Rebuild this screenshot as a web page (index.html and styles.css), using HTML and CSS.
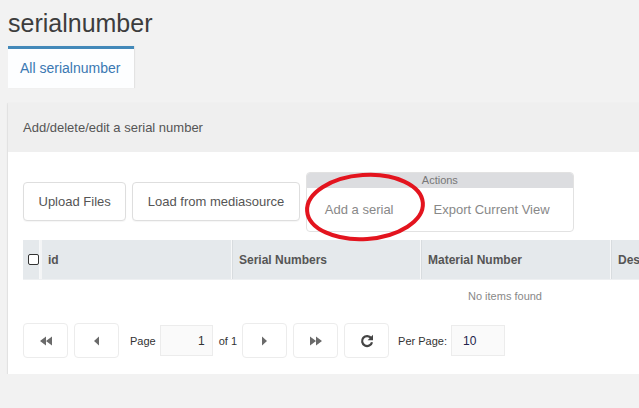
FILE: index.html
```html
<!DOCTYPE html>
<html>
<head>
<meta charset="utf-8">
<title>serialnumber</title>
<link rel="stylesheet" href="styles.css">
</head>
<body>
<div class="page">
  <h1 class="title">serialnumber</h1>
  <div class="tabs">
    <div class="tab active">All serialnumber</div>
  </div>
  <div class="panel">
    <div class="band">Add/delete/edit a serial number</div>
    <div class="toolbar">
      <button class="btn">Upload Files</button>
      <button class="btn">Load from mediasource</button>
      <div class="group">
        <div class="group-head">Actions</div>
        <div class="group-body">
          <span class="group-item">Add a serial</span>
          <span class="group-item">Export Current View</span>
        </div>
      </div>
      <svg class="annot" width="140" height="80" viewBox="0 0 140 80">
        <ellipse cx="66" cy="38" rx="58" ry="32" fill="none" stroke="#e3141e" stroke-width="4" transform="rotate(-4 66 38)"/>
      </svg>
    </div>
    <div class="table">
      <div class="thead">
        <div class="th th-cb"><span class="cb"></span></div>
        <div class="th th-id">id</div>
        <div class="th th-sn">Serial Numbers</div>
        <div class="th th-mn">Material Number</div>
        <div class="th th-ds">Description</div>
      </div>
      <div class="empty">No items found</div>
    </div>
    <div class="pager">
      <button class="pbtn" aria-label="first">
        <svg width="14" height="10" viewBox="0 0 14 10"><path d="M7 0.5 L1 5 L7 9.5 Z M13 0.5 L7 5 L13 9.5 Z" fill="#6a6a6a"/></svg>
      </button>
      <button class="pbtn" aria-label="previous">
        <svg width="7" height="10" viewBox="0 0 7 10"><path d="M6 0.5 L1 5 L6 9.5 Z" fill="#6a6a6a"/></svg>
      </button>
      <span class="plabel plabel-page">Page</span>
      <input class="pinput pinput-page" value="1">
      <span class="plabel plabel-of">of 1</span>
      <button class="pbtn" aria-label="next">
        <svg width="7" height="10" viewBox="0 0 7 10"><path d="M1 0.5 L6 5 L1 9.5 Z" fill="#6a6a6a"/></svg>
      </button>
      <button class="pbtn" aria-label="last">
        <svg width="14" height="10" viewBox="0 0 14 10"><path d="M1 0.5 L7 5 L1 9.5 Z M7 0.5 L13 5 L7 9.5 Z" fill="#6a6a6a"/></svg>
      </button>
      <button class="pbtn" aria-label="refresh">
        <svg width="14" height="14" viewBox="0 0 14 14"><path d="M11.2 4.2 A5 5 0 1 0 12 8.2" fill="none" stroke="#444" stroke-width="2.2"/><path d="M13 0.8 L13 6.2 L7.6 6.2 Z" fill="#444"/></svg>
      </button>
      <span class="plabel plabel-per">Per Page:</span>
      <input class="pinput pinput-per" value="10">
    </div>
  </div>
</div>
</body>
</html>
```
FILE: styles.css
```css
html, body {
  margin: 0;
  padding: 0;
  overflow: hidden;
  background: #f2f2f2;
  font-family: "Liberation Sans", Arial, sans-serif;
}
.page {
  padding-left: 8px;
  width: 1010px;
}
.title {
  margin: 8px 0 8px 0;
  font-size: 25px;
  line-height: 30px;
  font-weight: normal;
  color: #3d3d3d;
}
.tabs {
  display: flex;
}
.tab {
  width: 126px;
  box-sizing: border-box;
  height: 42px;
  border-top: 3px solid #4389b9;
  background: #fdfeff;
  color: #3a78b2;
  font-size: 14px;
  line-height: 39px;
  padding-left: 12px;
  box-shadow: 1px 0 1px rgba(0,0,0,0.06);
}
.panel {
  width: 994px;
  background: #fff;
  padding-bottom: 16px;
  box-shadow: 0 1px 2px rgba(0,0,0,0.08), -1px 0 1px rgba(0,0,0,0.04);
}
.band {
  margin-top: 15px;
  height: 49px;
  line-height: 49px;
  background: #efefef;
  padding-left: 15px;
  font-size: 13px;
  color: #555;
}
.toolbar {
  position: relative;
  display: flex;
  align-items: flex-start;
  gap: 6px;
  margin-top: 20px;
  padding-left: 15px;
}
.btn {
  margin-top: 10px;
  height: 39px;
  padding: 0 14.5px;
  border: 1px solid #dedede;
  border-radius: 4px;
  background: #fff;
  font-family: "Liberation Sans", Arial, sans-serif;
  font-size: 13px;
  color: #555;
  box-shadow: 0 1px 1px rgba(0,0,0,0.04);
}
.group {
  width: 268px;
  box-sizing: border-box;
  border: 1px solid #e2e2e2;
  border-radius: 4px;
  overflow: hidden;
}
.group-head {
  height: 15px;
  line-height: 15px;
  background: #dcdde0;
  text-align: center;
  font-size: 11px;
  color: #777;
}
.group-body {
  display: flex;
  height: 43px;
  line-height: 43px;
}
.group-item {
  padding: 0 19px 0 18px;
  font-size: 13px;
  color: #888;
}
.group-item + .group-item {
  padding-left: 21px;
}
.annot {
  position: absolute;
  left: 291px;
  top: -3px;
}
.table {
  margin: 8px 0 0 15px;
  width: 964px;
}
.thead {
  display: flex;
  height: 39px;
  background: #e5e9ec;
  border-bottom: 1px solid #eef0f2;
}
.th {
  box-sizing: border-box;
  display: flex;
  align-items: center;
  padding-left: 6px;
  font-size: 12px;
  font-weight: bold;
  color: #555;
  border-right: 1px solid #d8dcdf;
  box-shadow: inset -1px 0 0 #f7f8f9;
}
.th-cb { width: 19px; padding-left: 5px; border-right: 2px solid #f4f5f6; }
.th-id { width: 191px; }
.th-sn { width: 189px; }
.th-mn { width: 190px; }
.th-ds { width: 375px; border-right: none; box-shadow: none; }
.cb {
  width: 9px;
  height: 9px;
  border: 1.5px solid #333;
  border-radius: 2px;
  background: #fff;
}
.empty {
  height: 33px;
  line-height: 33px;
  text-align: center;
  font-size: 11px;
  color: #888;
}
.pager {
  display: flex;
  align-items: center;
  margin: 10px 0 0 15px;
  height: 35px;
}
.pbtn {
  width: 45px;
  height: 35px;
  margin-right: 6px;
  padding: 0;
  border: 1px solid #ececec;
  border-radius: 4px;
  background: #fff;
  display: flex;
  align-items: center;
  justify-content: center;
}
.plabel {
  font-size: 11px;
  color: #333;
}
.plabel-page { margin-left: 5px; }
.plabel-of { margin-left: 6px; margin-right: 5px; }
.plabel-per { margin-left: 3px; }
.pinput {
  box-sizing: border-box;
  height: 31px;
  margin-left: 4px;
  border: 1px solid #ececec;
  background: #fafafa;
  font-family: "Liberation Sans", Arial, sans-serif;
  font-size: 12px;
  color: #333;
  outline: none;
}
.pinput-page {
  width: 53px;
  text-align: right;
  padding-right: 7px;
}
.pinput-per {
  width: 54px;
  padding-left: 11px;
  color: #22224a;
}
```
